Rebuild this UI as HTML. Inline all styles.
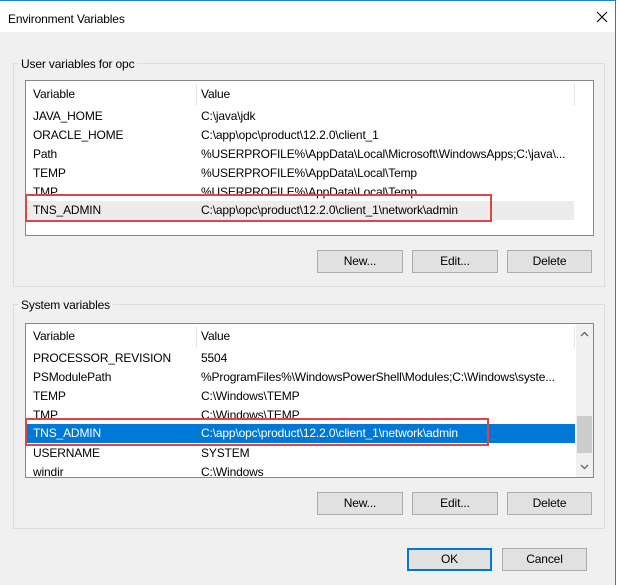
<!DOCTYPE html>
<html><head><style>
*{margin:0;padding:0;box-sizing:border-box}
body{width:619px;height:585px;background:#fff;font-family:"Liberation Sans",sans-serif;font-size:12px;letter-spacing:-0.15px;color:#000;position:relative;overflow:hidden}
.win{position:absolute;left:0;top:0;width:616px;height:585px;background:#f0f0f0;border-top:1px solid #1883d7;border-right:1px solid #1883d7}
.title{position:absolute;left:0;top:0;width:615px;height:31px;background:#fff}
.abs{position:absolute;white-space:nowrap}
.grp{position:absolute;border:1px solid #dcdcdc}
.lbl{position:absolute;background:#f0f0f0;padding:0 3px;line-height:14px}
.list{position:absolute;background:#fff;border:1px solid #828790;overflow:hidden}
.row{position:absolute;left:0;height:19px;line-height:19px}
.row span{position:absolute;white-space:nowrap}
.btn{position:absolute;height:23px;background:#e1e1e1;border:1px solid #adadad;text-align:center;line-height:21px}
.red{position:absolute;border:2px solid #e04545}
</style></head><body>
<div class="win">
<div class="title"></div>
<div class="abs" style="left:8px;top:11px;font-size:12px">Environment Variables</div>
<svg class="abs" style="left:596px;top:10px" width="12" height="12"><path d="M1 1L11 11M11 1L1 11" stroke="#000" stroke-width="1.1"/></svg>

<div class="grp" style="left:13px;top:62px;width:592px;height:224px"></div>
<div class="lbl" style="left:18px;top:56px">User variables for opc</div>
<div class="list" style="left:25px;top:79px;width:569px;height:156px">
 <div class="row" style="top:4px;width:548px"><span style="left:7px">Variable</span><span style="left:175px">Value</span></div>
 <div class="abs" style="left:170px;top:3px;width:1px;height:22px;background:#e5e5e5"></div>
 <div class="abs" style="left:548px;top:3px;width:1px;height:22px;background:#e5e5e5"></div>
 <div class="row" style="top:26px"><span style="left:7px">JAVA_HOME</span><span style="left:175px">C:\java\jdk</span></div>
 <div class="row" style="top:45px"><span style="left:7px">ORACLE_HOME</span><span style="left:175px">C:\app\opc\product\12.2.0\client_1</span></div>
 <div class="row" style="top:64px"><span style="left:7px">Path</span><span style="left:175px">%USERPROFILE%\AppData\Local\Microsoft\WindowsApps;C:\java\...</span></div>
 <div class="row" style="top:83px"><span style="left:7px">TEMP</span><span style="left:175px">%USERPROFILE%\AppData\Local\Temp</span></div>
 <div class="row" style="top:102px"><span style="left:7px">TMP</span><span style="left:175px">%USERPROFILE%\AppData\Local\Temp</span></div>
 <div class="row" style="top:120px;width:548px;background:#ececec"><span style="left:7px">TNS_ADMIN</span><span style="left:175px">C:\app\opc\product\12.2.0\client_1\network\admin</span></div>
</div>
<div class="red" style="left:25px;top:193px;width:467px;height:28px"></div>
<div class="btn" style="left:317px;top:249px;width:86px">New...</div>
<div class="btn" style="left:412px;top:249px;width:86px">Edit...</div>
<div class="btn" style="left:507px;top:249px;width:85px">Delete</div>

<div class="grp" style="left:13px;top:303px;width:592px;height:225px"></div>
<div class="lbl" style="left:18px;top:297px">System variables</div>
<div class="list" style="left:25px;top:322px;width:569px;height:155px">
 <div class="row" style="top:3px;width:548px"><span style="left:7px">Variable</span><span style="left:175px">Value</span></div>
 <div class="abs" style="left:170px;top:2px;width:1px;height:22px;background:#e5e5e5"></div>
 <div class="abs" style="left:548px;top:2px;width:1px;height:22px;background:#e5e5e5"></div>
 <div class="row" style="top:25px"><span style="left:7px">PROCESSOR_REVISION</span><span style="left:175px">5504</span></div>
 <div class="row" style="top:44px"><span style="left:7px">PSModulePath</span><span style="left:175px">%ProgramFiles%\WindowsPowerShell\Modules;C:\Windows\syste...</span></div>
 <div class="row" style="top:63px"><span style="left:7px">TEMP</span><span style="left:175px">C:\Windows\TEMP</span></div>
 <div class="row" style="top:82px"><span style="left:7px">TMP</span><span style="left:175px">C:\Windows\TEMP</span></div>
 <div class="row" style="top:100px;width:549px;background:#0078d7;color:#fff"><span style="left:7px">TNS_ADMIN</span><span style="left:175px">C:\app\opc\product\12.2.0\client_1\network\admin</span></div>
 <div class="row" style="top:120px"><span style="left:7px">USERNAME</span><span style="left:175px">SYSTEM</span></div>
 <div class="row" style="top:139px"><span style="left:7px">windir</span><span style="left:175px">C:\Windows</span></div>
 <div class="abs" style="left:550px;top:0;width:17px;height:153px;background:#f0f0f0"></div>
 <div class="abs" style="left:551px;top:92px;width:15px;height:37px;background:#cdcdcd"></div>
 <svg class="abs" style="left:554px;top:7px" width="9" height="6"><path d="M1 5L4.5 1.5L8 5" stroke="#606060" fill="none" stroke-width="1.3"/></svg>
 <svg class="abs" style="left:554px;top:140px" width="9" height="6"><path d="M1 1L4.5 4.5L8 1" stroke="#606060" fill="none" stroke-width="1.3"/></svg>
</div>
<div class="red" style="left:25px;top:417px;width:464px;height:28px"></div>
<div class="btn" style="left:317px;top:491px;width:86px">New...</div>
<div class="btn" style="left:412px;top:491px;width:86px">Edit...</div>
<div class="btn" style="left:507px;top:491px;width:85px">Delete</div>

<div class="btn" style="left:407px;top:547px;width:85px;border:2px solid #0078d7;line-height:19px">OK</div>
<div class="btn" style="left:502px;top:547px;width:85px">Cancel</div>
</div>
</body></html>
